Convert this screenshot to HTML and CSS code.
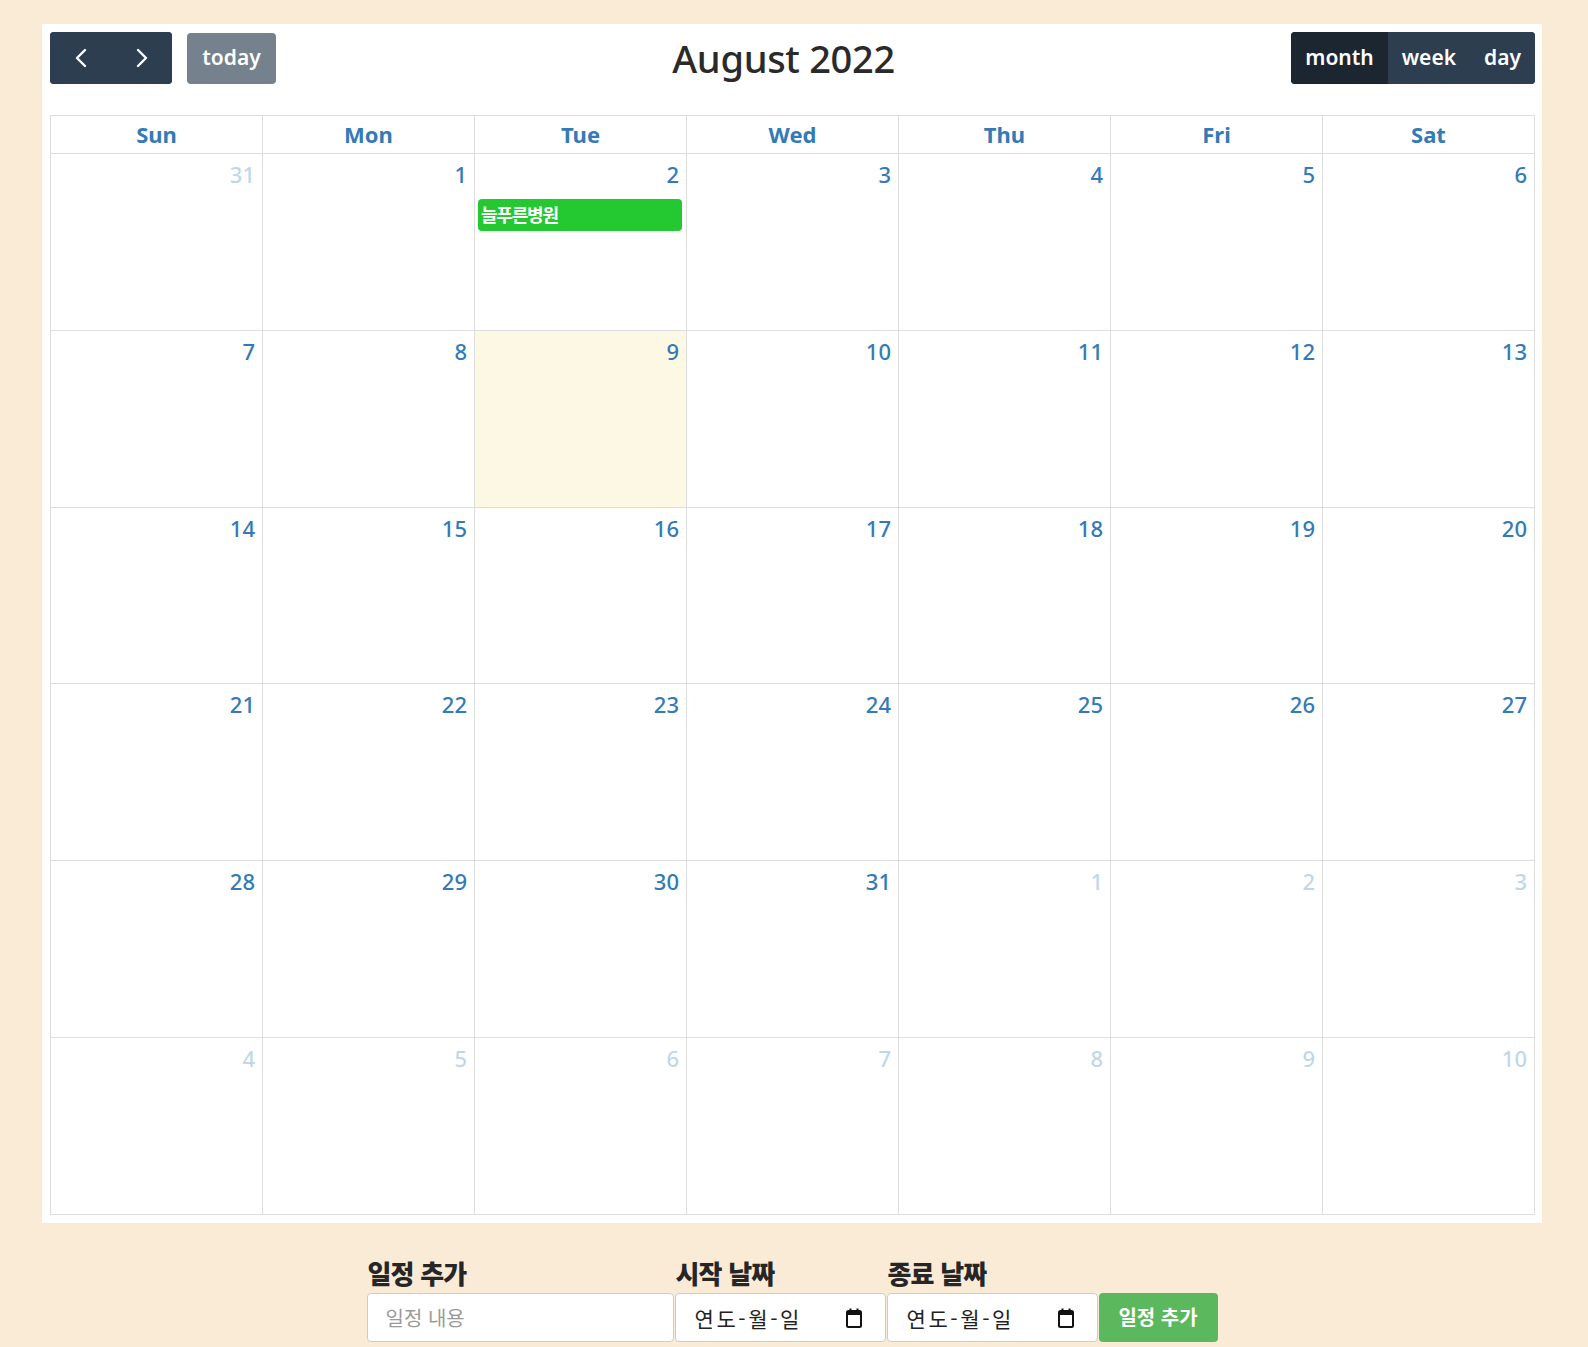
FILE: index.html
```html
<!DOCTYPE html>
<html lang="ko">
<head>
<meta charset="utf-8">
<title>Calendar</title>
<link rel="stylesheet" href="styles.css">
</head>
<body>
<div class="page">
  <div class="panel">
    <div class="toolbar">
      <div class="tb-left">
        <div class="btn-group">
          <button class="btn nav-btn" aria-label="prev">
            <svg width="14" height="20" viewBox="0 0 14 20"><path d="M11 2 L3 10 L11 18" fill="none" stroke="#fff" stroke-width="2.4" stroke-linecap="round" stroke-linejoin="round"/></svg>
          </button>
          <button class="btn nav-btn" aria-label="next">
            <svg width="14" height="20" viewBox="0 0 14 20"><path d="M3 2 L11 10 L3 18" fill="none" stroke="#fff" stroke-width="2.4" stroke-linecap="round" stroke-linejoin="round"/></svg>
          </button>
        </div>
        <button class="btn today-btn">today</button>
      </div>
      <h2 class="title">August 2022</h2>
      <div class="btn-group view-group">
        <button class="btn view-btn active">month</button>
        <button class="btn view-btn">week</button>
        <button class="btn view-btn">day</button>
      </div>
    </div>

    <div class="cal">
      <div class="head">Sun</div>
      <div class="head">Mon</div>
      <div class="head">Tue</div>
      <div class="head">Wed</div>
      <div class="head">Thu</div>
      <div class="head">Fri</div>
      <div class="head">Sat</div>

      <div class="day other"><span class="num">31</span></div>
      <div class="day"><span class="num">1</span></div>
      <div class="day"><span class="num">2</span><div class="event">늘푸른병원</div></div>
      <div class="day"><span class="num">3</span></div>
      <div class="day"><span class="num">4</span></div>
      <div class="day"><span class="num">5</span></div>
      <div class="day"><span class="num">6</span></div>

      <div class="day"><span class="num">7</span></div>
      <div class="day"><span class="num">8</span></div>
      <div class="day today"><span class="num">9</span></div>
      <div class="day"><span class="num">10</span></div>
      <div class="day"><span class="num">11</span></div>
      <div class="day"><span class="num">12</span></div>
      <div class="day"><span class="num">13</span></div>

      <div class="day"><span class="num">14</span></div>
      <div class="day"><span class="num">15</span></div>
      <div class="day"><span class="num">16</span></div>
      <div class="day"><span class="num">17</span></div>
      <div class="day"><span class="num">18</span></div>
      <div class="day"><span class="num">19</span></div>
      <div class="day"><span class="num">20</span></div>

      <div class="day"><span class="num">21</span></div>
      <div class="day"><span class="num">22</span></div>
      <div class="day"><span class="num">23</span></div>
      <div class="day"><span class="num">24</span></div>
      <div class="day"><span class="num">25</span></div>
      <div class="day"><span class="num">26</span></div>
      <div class="day"><span class="num">27</span></div>

      <div class="day"><span class="num">28</span></div>
      <div class="day"><span class="num">29</span></div>
      <div class="day"><span class="num">30</span></div>
      <div class="day"><span class="num">31</span></div>
      <div class="day other"><span class="num">1</span></div>
      <div class="day other"><span class="num">2</span></div>
      <div class="day other"><span class="num">3</span></div>

      <div class="day other"><span class="num">4</span></div>
      <div class="day other"><span class="num">5</span></div>
      <div class="day other"><span class="num">6</span></div>
      <div class="day other"><span class="num">7</span></div>
      <div class="day other"><span class="num">8</span></div>
      <div class="day other"><span class="num">9</span></div>
      <div class="day other"><span class="num">10</span></div>
    </div>
  </div>

  <form class="add-form">
    <div class="field field-text">
      <label class="label">일정 추가</label>
      <input class="input" type="text" placeholder="일정 내용">
    </div>
    <div class="field field-date">
      <label class="label">시작 날짜</label>
      <div class="input date-input">
        <span class="date-text">연도-월-일</span>
        <svg class="cal-icon" width="16" height="20" viewBox="0 0 16 20"><rect x="1" y="3" width="14" height="16" rx="1.5" fill="none" stroke="#111" stroke-width="2"/><rect x="1" y="3" width="14" height="4" fill="#111"/><rect x="3.5" y="0.5" width="2" height="4" fill="#111"/><rect x="10.5" y="0.5" width="2" height="4" fill="#111"/></svg>
      </div>
    </div>
    <div class="field field-date">
      <label class="label">종료 날짜</label>
      <div class="input date-input">
        <span class="date-text">연도-월-일</span>
        <svg class="cal-icon" width="16" height="20" viewBox="0 0 16 20"><rect x="1" y="3" width="14" height="16" rx="1.5" fill="none" stroke="#111" stroke-width="2"/><rect x="1" y="3" width="14" height="4" fill="#111"/><rect x="3.5" y="0.5" width="2" height="4" fill="#111"/><rect x="10.5" y="0.5" width="2" height="4" fill="#111"/></svg>
      </div>
    </div>
    <div class="field field-btn">
      <span class="label">&nbsp;</span>
      <button type="button" class="add-btn">일정 추가</button>
    </div>
  </form>
</div>
</body>
</html>
```

FILE: styles.css
```css
* {
  box-sizing: border-box;
}

html, body {
  margin: 0;
  padding: 0;
}

body {
  background: #faebd7;
  font-family: "Noto Sans", "Noto Sans CJK KR", sans-serif;
  color: #2b2b2b;
}

.page {
  padding: 24px 46px 0 42px;
}

.panel {
  background: #ffffff;
  padding: 8px 7px 8px 8px;
}

/* toolbar */
.toolbar {
  display: flex;
  align-items: center;
  justify-content: space-between;
  height: 52px;
  margin-bottom: 31px;
}

.tb-left {
  display: flex;
  align-items: center;
}

.btn-group {
  display: flex;
  height: 52px;
  border-radius: 4px;
  overflow: hidden;
  background: #2c3e50;
}

.btn {
  border: 0;
  margin: 0;
  font-family: "Noto Sans", sans-serif;
  font-size: 21px;
  font-weight: 600;
  color: #ffffff;
  background: #2c3e50;
  cursor: pointer;
  display: flex;
  align-items: center;
  justify-content: center;
}

.nav-btn {
  width: 61px;
  height: 52px;
  padding: 0;
}

.today-btn {
  margin-left: 15px;
  width: 89px;
  height: 51px;
  border-radius: 4px;
  opacity: 0.65;
  padding: 0 0 3px;
}

.view-btn {
  height: 52px;
  padding: 0 14px 3px;
}

.view-btn.active {
  background: #1b2631;
}

.title {
  margin: 0;
  font-size: 38px;
  font-weight: 500;
  color: #2a2a2a;
  letter-spacing: -0.3px;
  line-height: 52px;
}

/* calendar grid */
.cal {
  display: grid;
  grid-template-columns: repeat(7, 1fr);
  grid-template-rows: 37px repeat(6, 1fr);
  gap: 1px;
  padding: 1px;
  background: #dddddd;
  height: 1100px;
}

.head {
  background: #ffffff;
  display: flex;
  align-items: center;
  justify-content: center;
  font-size: 22px;
  font-weight: 700;
  color: #337ab7;
  padding-bottom: 2px;
}

.day {
  background: #ffffff;
  display: flex;
  flex-direction: column;
  align-items: stretch;
  padding: 5px 4px 0 3px;
}

.day.today {
  background: #fcf8e3;
}

.num {
  align-self: flex-end;
  font-size: 22px;
  font-weight: 500;
  line-height: 30px;
  color: #337ab7;
  padding-right: 3px;
}

.day.other .num {
  opacity: 0.3;
}

.event {
  margin-top: 10px;
  height: 32px;
  line-height: 31px;
  background: #24c932;
  border-radius: 4px;
  color: #ffffff;
  font-family: "Noto Sans CJK KR", sans-serif;
  font-weight: 700;
  font-size: 18px;
  padding-left: 3px;
  letter-spacing: -1.2px;
}

/* form */
.add-form {
  display: flex;
  justify-content: center;
  gap: 1px;
  margin: 35px 0 0;
}

.field {
  display: flex;
  flex-direction: column;
}

.field-text { width: 307px; }
.field-date { width: 211px; }
.field-btn { width: 119px; }

.label {
  font-family: "Noto Sans CJK KR", sans-serif;
  font-weight: 900;
  font-size: 26px;
  line-height: 30px;
  color: #262626;
  margin-bottom: 5px;
  padding-left: 1px;
  letter-spacing: -0.8px;
}

.input {
  height: 49px;
  border: 1px solid #cccccc;
  border-radius: 4px;
  background: #ffffff;
  font-family: "Noto Sans CJK KR", sans-serif;
  font-size: 20px;
  padding: 0 0 0 18px;
  color: #222222;
  outline: none;
}

.input::placeholder {
  color: #9a9a9a;
}

.date-input {
  display: flex;
  align-items: center;
  justify-content: space-between;
  padding: 0 23px 0 19px;
}

.date-text {
  font-size: 21px;
  color: #222222;
  letter-spacing: 2.6px;
}

.cal-icon {
  flex: none;
}

.add-btn {
  height: 49px;
  border: 0;
  border-radius: 4px;
  background: #5cb85c;
  color: #ffffff;
  font-family: "Noto Sans CJK KR", sans-serif;
  font-size: 20px;
  font-weight: 700;
  cursor: pointer;
  padding: 0 0 2px;
}
```
